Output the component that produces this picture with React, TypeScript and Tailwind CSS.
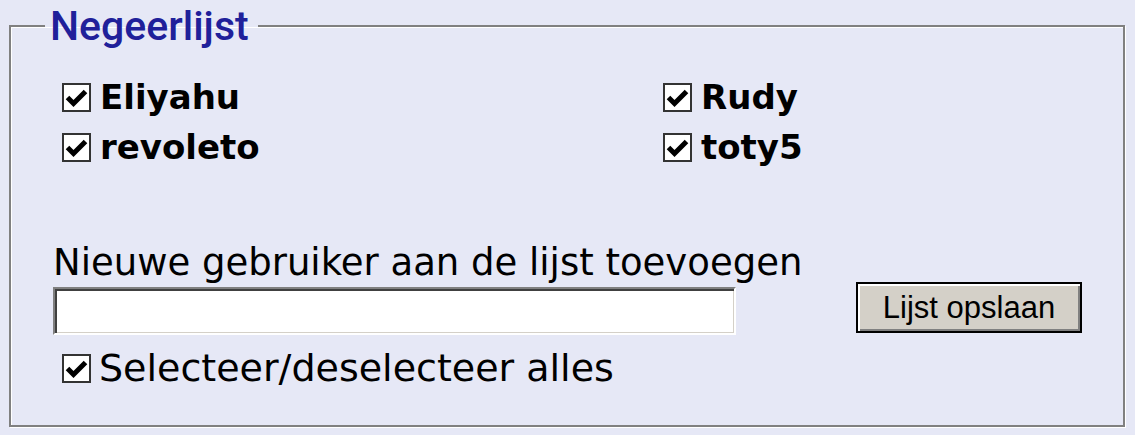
const names = [
  ['Eliyahu', 'Rudy'],
  ['revoleto', 'toty5'],
];

const CheckBox = () => (
  <span className="flex w-[29px] h-[29px] shrink-0 border-2 border-[#333] bg-white">
    <svg viewBox="0 0 25 25" className="w-full h-full">
      <path d="M3.5 12.5 L9.5 18.5 L21.5 6.5" fill="none" stroke="#000" strokeWidth="5" />
    </svg>
  </span>
);

export default function App() {
  return (
    <div className="w-[1135px] h-[435px] bg-[#e6e8f6] pt-[3px] pl-[9px] font-['DejaVu_Sans',sans-serif] text-black">
      <fieldset className="m-0 w-[1116px] h-[424px] border-2 border-[#808080] px-[34px] pt-0 pb-0 shadow-[inset_1px_1px_0_#fff,1px_1px_0_#fff]">
        <legend className="pl-[5px] pr-[9px] font-['Roboto',sans-serif] font-medium text-[41px] leading-[46px] text-[#20209a]">
          Negeerlijst
        </legend>

        <div className="pl-[8px]">
          <div className="mt-[23px] ml-[9px] grid grid-cols-[601px_1fr]">
            {names.flat().map((n) => (
              <label key={n} className="flex h-[50px] items-center gap-[9px]">
                <CheckBox />
                <span className="text-[34px] font-bold leading-none">{n}</span>
              </label>
            ))}
          </div>

          <div className="mt-[71px] text-[37px] leading-[39px]">Nieuwe gebruiker aan de lijst toevoegen</div>

          <div className="flex items-start gap-[120px]">
            <input
              type="text"
              className="mt-[5px] w-[683px] h-[48px] bg-white border-2 border-t-[#808080] border-l-[#808080] border-b-white border-r-white shadow-[inset_2px_2px_0_#404040,inset_-1px_-1px_0_#d4d0c8] outline-none"
            />
            <button className="w-[226px] h-[51px] bg-[#d4d0c8] border-2 border-black shadow-[inset_2px_2px_0_#fff,inset_-2px_-2px_0_#808080] font-['Liberation_Sans',sans-serif] text-[31px] leading-none">
              Lijst opslaan
            </button>
          </div>

          <label className="mt-[8px] ml-[9px] flex h-[50px] items-center gap-[8px]">
            <CheckBox />
            <span className="text-[38px] leading-none">Selecteer/deselecteer alles</span>
          </label>
        </div>
      </fieldset>
    </div>
  );
}
